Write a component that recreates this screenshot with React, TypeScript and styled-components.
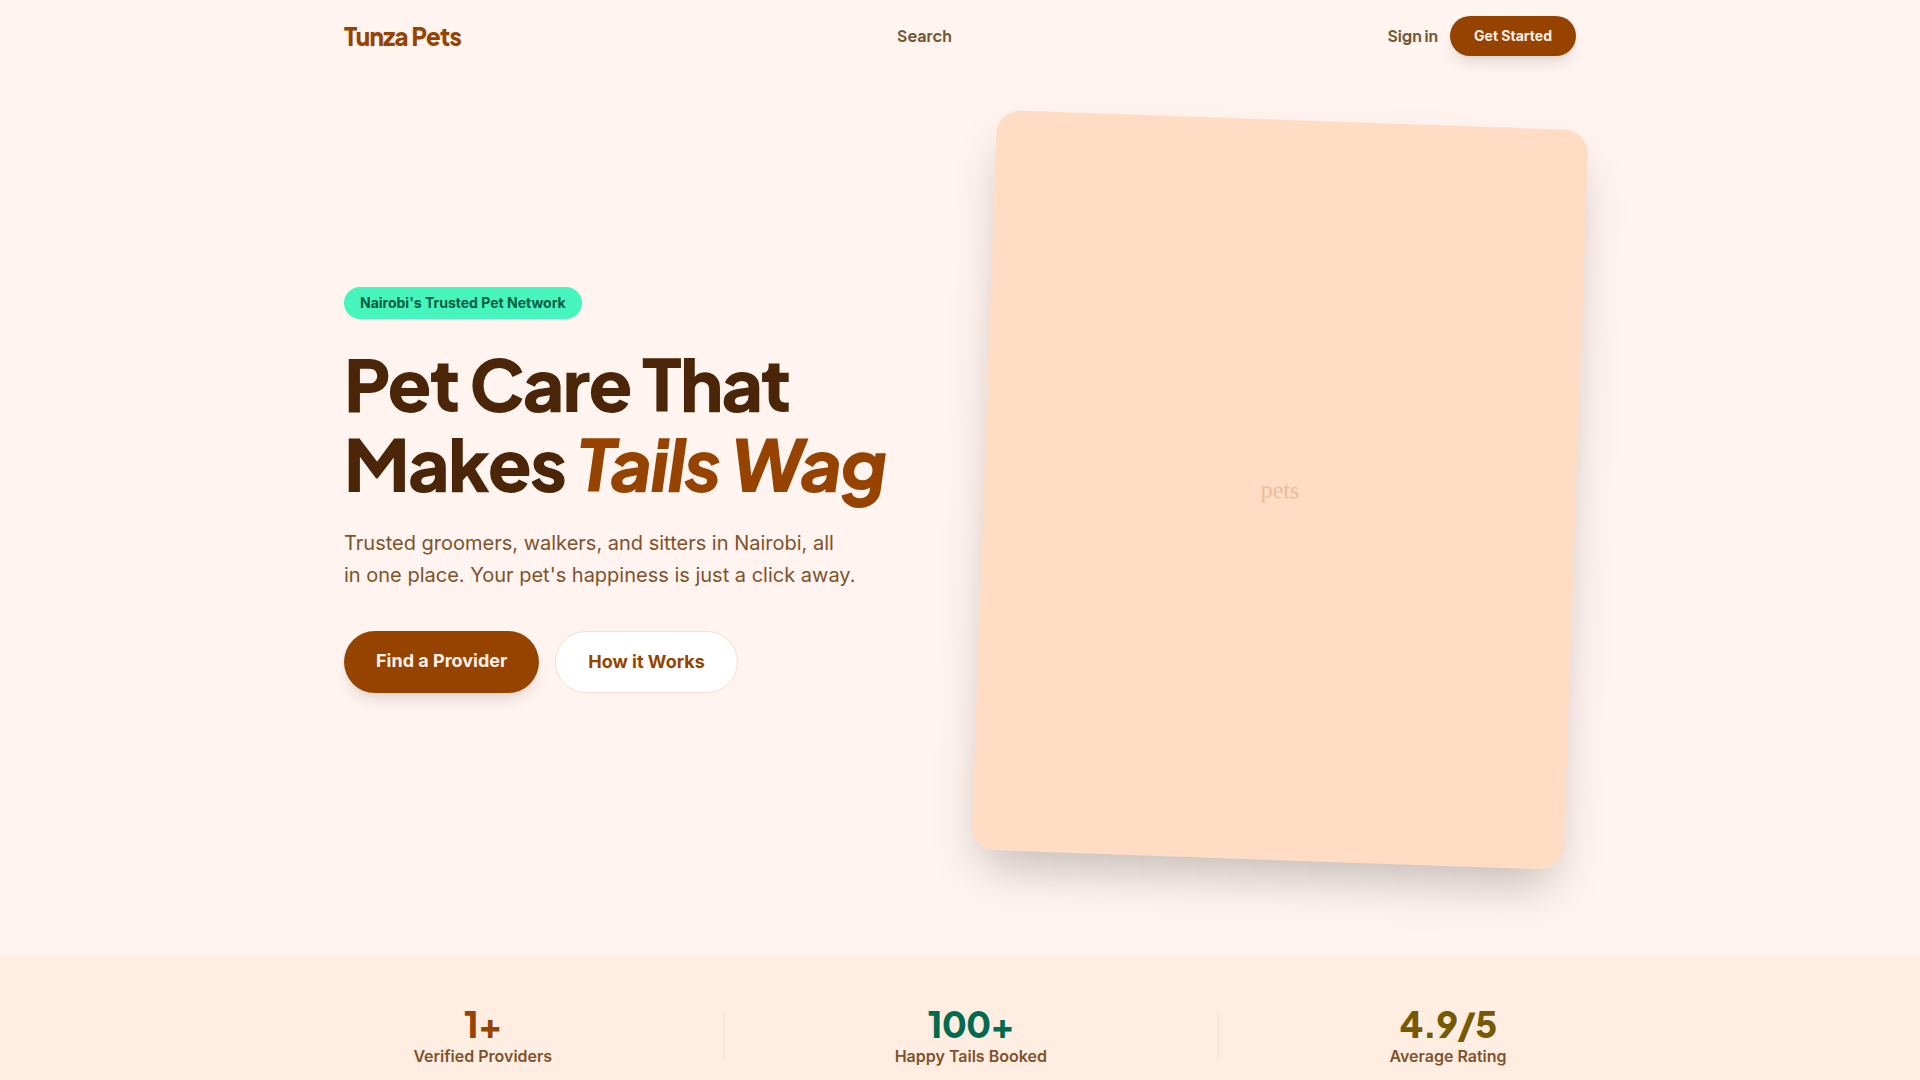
import React from "react";
import styled, { createGlobalStyle } from "styled-components";

const display = '"Plus Jakarta Sans", Inter, sans-serif';
const body = 'Inter, "Liberation Sans", sans-serif';

const color = {
  page: "#fff4ef",
  band: "#ffede1",
  card: "#ffdcc3",
  primary: "#964300",
  onPrimary: "#fff0e9",
  heading: "#4a2507",
  nav: "#755733",
  muted: "#7f522b",
  border: "#f4e0d0",
  mint: "#46f5bb",
  onMint: "#005d44",
  green: "#006b4f",
  olive: "#765900",
};

const GlobalStyle = createGlobalStyle`
  *, *::before, *::after { box-sizing: border-box; }
  body {
    margin: 0;
    background: ${color.page};
    color: ${color.heading};
    font-family: ${body};
    font-size: 16px;
    line-height: 24px;
  }
  h1, p { margin: 0; }
  a { color: inherit; text-decoration: none; }
`;

const Container = styled.div`
  width: 100%;
  max-width: 1280px;
  margin: 0 auto;
  padding: 0 24px;
`;

const HeaderRow = styled(Container)`
  display: flex;
  align-items: center;
  justify-content: space-between;
  padding-top: 16px;
  padding-bottom: 16px;
`;

const Logo = styled.a`
  && { color: ${color.primary}; }
  font-family: ${display};
  font-size: 24px;
  line-height: 32px;
  font-weight: 800;
  letter-spacing: -0.025em;
`;

const NavLink = styled.a`
  && { color: ${color.nav}; }
  font-family: ${display};
  font-weight: 700;
`;

const Actions = styled.div`
  display: flex;
  align-items: center;
  gap: 12px;
`;

const PillButton = styled.button<{ $large?: boolean; $outline?: boolean }>`
  display: flex;
  align-items: flex-start;
  border: ${(p) => (p.$outline ? `1px solid ${color.border}` : "0")};
  border-radius: 48px;
  padding: ${(p) => (p.$large ? "16px 32px" : "10px 24px")};
  background: ${(p) => (p.$outline ? "#ffffff" : color.primary)};
  color: ${(p) => (p.$outline ? color.primary : color.onPrimary)};
  font-family: ${body};
  font-size: ${(p) => (p.$large ? "18px" : "14px")};
  line-height: ${(p) => (p.$large ? "28px" : "20px")};
  font-weight: 700;
  cursor: pointer;
  box-shadow: ${(p) =>
    p.$outline
      ? "none"
      : "0 10px 15px -3px rgba(0, 0, 0, 0.1), 0 4px 6px -4px rgba(0, 0, 0, 0.1)"};
`;

const Hero = styled(Container)`
  display: grid;
  grid-template-columns: 1fr 1fr;
  gap: 48px;
  align-items: center;
  padding-top: 48px;
  padding-bottom: 96px;
`;

const HeroCopy = styled.div`
  display: flex;
  flex-direction: column;
  align-items: flex-start;
  gap: 24px;
`;

const Badge = styled.span`
  border-radius: 16px;
  padding: 6px 16px;
  background: ${color.mint};
  color: ${color.onMint};
  font-size: 14px;
  line-height: 20px;
  font-weight: 700;
`;

const Title = styled.h1`
  font-family: ${display};
  font-size: 72px;
  line-height: 80px;
  font-weight: 800;
  letter-spacing: -0.025em;

  em {
    color: ${color.primary};
    font-style: oblique 12deg;
  }
`;

const Lead = styled.p`
  max-width: 512px;
  color: ${color.muted};
  font-size: 20px;
  line-height: 32px;
`;

const ButtonRow = styled.div`
  display: flex;
  gap: 16px;
  padding-top: 16px;
`;

const PhotoCard = styled.div`
  display: grid;
  place-items: center;
  aspect-ratio: 4 / 5;
  border-radius: 24px;
  background: ${color.card};
  color: #ecbb9b;
  font-family: "Liberation Serif", serif;
  font-size: 24px;
  line-height: 32px;
  transform: rotate(2deg);
  box-shadow: 0 25px 50px -12px rgba(0, 0, 0, 0.25);
`;

const StatsBand = styled.section`
  padding: 48px 0;
  background: ${color.band};
`;

const StatsRow = styled(Container)`
  display: flex;
  align-items: center;
  justify-content: space-around;
  gap: 32px;
`;

const Stat = styled.div`
  text-align: center;
`;

const StatValue = styled.div<{ $color: string }>`
  color: ${(p) => p.$color};
  font-family: ${display};
  font-size: 36px;
  line-height: 40px;
  font-weight: 800;
  letter-spacing: -0.025em;
`;

const StatLabel = styled.div`
  color: ${color.muted};
  font-weight: 600;
`;

const Divider = styled.div`
  width: 1px;
  height: 48px;
  background: ${color.border};
`;

const stats = [
  { value: "1+", label: "Verified Providers", color: color.primary },
  { value: "100+", label: "Happy Tails Booked", color: color.green },
  { value: "4.9/5", label: "Average Rating", color: color.olive },
];

export default function App() {
  return (
    <>
      <GlobalStyle />
      <header>
        <HeaderRow>
          <Logo href="#">Tunza Pets</Logo>
          <nav>
            <NavLink href="#search">Search</NavLink>
          </nav>
          <Actions>
            <NavLink href="#sign-in">Sign in</NavLink>
            <PillButton type="button">Get Started</PillButton>
          </Actions>
        </HeaderRow>
      </header>
      <main>
        <Hero>
          <HeroCopy>
            <Badge>Nairobi's Trusted Pet Network</Badge>
            <Title>
              Pet Care That
              <br />
              Makes <em>Tails Wag</em>
            </Title>
            <Lead>
              Trusted groomers, walkers, and sitters in Nairobi, all in one
              place. Your pet's happiness is just a click away.
            </Lead>
            <ButtonRow>
              <PillButton type="button" $large>
                Find a Provider
              </PillButton>
              <PillButton type="button" $large $outline>
                How it Works
              </PillButton>
            </ButtonRow>
          </HeroCopy>
          <PhotoCard>pets</PhotoCard>
        </Hero>
        <StatsBand>
          <StatsRow>
            {stats.map((s, i) => (
              <React.Fragment key={s.label}>
                {i > 0 && <Divider />}
                <Stat>
                  <StatValue $color={s.color}>{s.value}</StatValue>
                  <StatLabel>{s.label}</StatLabel>
                </Stat>
              </React.Fragment>
            ))}
          </StatsRow>
        </StatsBand>
      </main>
    </>
  );
}
